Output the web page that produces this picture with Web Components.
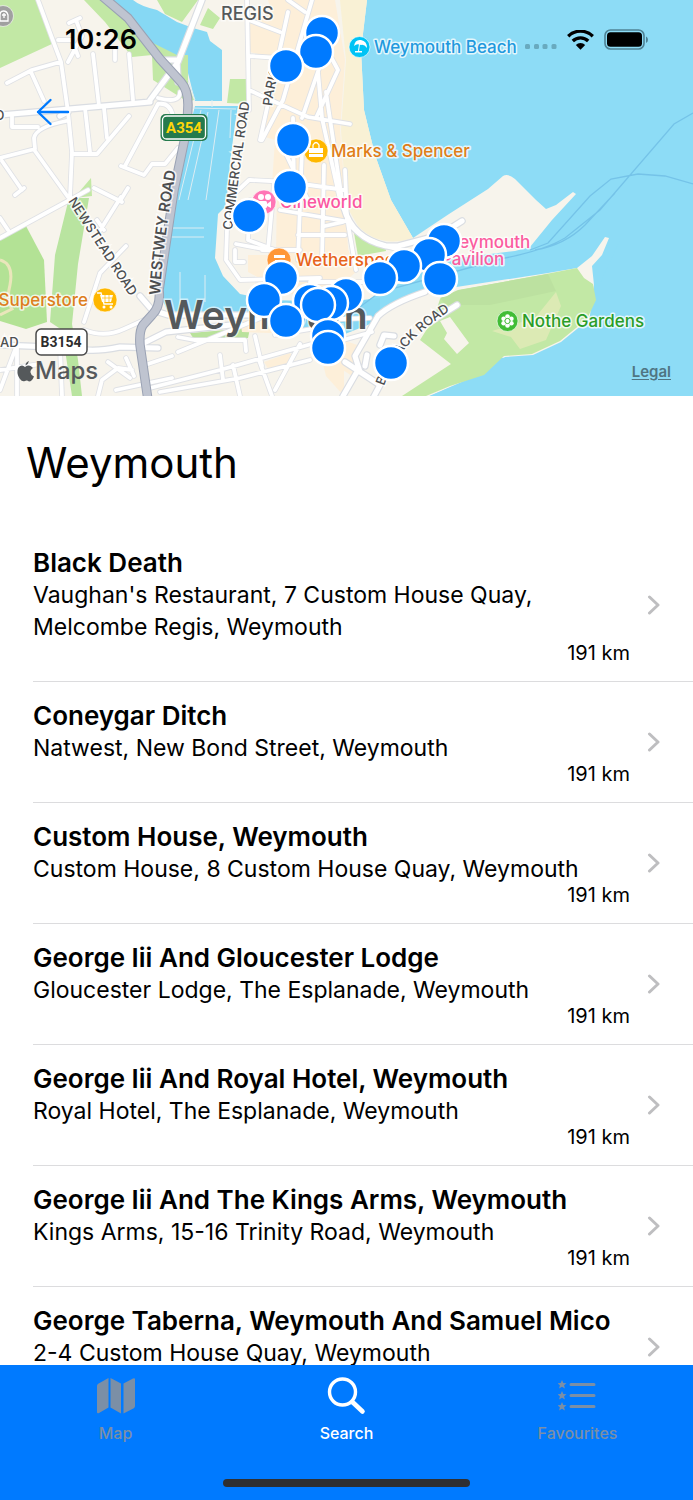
<!DOCTYPE html>
<html lang="en">
<head>
<meta charset="utf-8">
<meta name="viewport" content="width=device-width, initial-scale=1">
<title>Weymouth</title>
<style>
  body {
    margin: 0;
    background: #fff;
    color: #000;
    font-family: Inter, "Liberation Sans", sans-serif;
  }
</style>
</head>
<body>
<app-screen>
  <map-view slot="map"></map-view>
  <status-bar slot="status" time="10:26"></status-bar>
  <h1 slot="title">Weymouth</h1>
  <place-row name="Black Death" distance="191 km">Vaughan's Restaurant, 7 Custom House Quay, Melcombe Regis, Weymouth</place-row>
  <place-row name="Coneygar Ditch" distance="191 km">Natwest, New Bond Street, Weymouth</place-row>
  <place-row name="Custom House, Weymouth" distance="191 km">Custom House, 8 Custom House Quay, Weymouth</place-row>
  <place-row name="George Iii And Gloucester Lodge" distance="191 km">Gloucester Lodge, The Esplanade, Weymouth</place-row>
  <place-row name="George Iii And Royal Hotel, Weymouth" distance="191 km">Royal Hotel, The Esplanade, Weymouth</place-row>
  <place-row name="George Iii And The Kings Arms, Weymouth" distance="191 km">Kings Arms, 15-16 Trinity Road, Weymouth</place-row>
  <place-row name="George Taberna, Weymouth And Samuel Mico" distance="191 km">2-4 Custom House Quay, Weymouth</place-row>
  <tab-bar slot="tabs"></tab-bar>
</app-screen>

<script>
class AppScreen extends HTMLElement {
  constructor() {
    super();
    this.attachShadow({ mode: "open" });
    this.shadowRoot.innerHTML = `
      <style>
        :host {
          display: flex;
          flex-direction: column;
          height: 100vh;
          overflow: hidden;
        }
        header {
          position: relative;
          flex: none;
        }
        .over {
          position: absolute;
          top: 0;
          left: 0;
          right: 0;
        }
        main {
          flex: 1;
          min-height: 0;
          overflow: hidden;
        }
        ::slotted(h1) {
          margin: 0;
          padding: 39px 26px 38px;
          font-size: 42px;
          line-height: 56px;
          font-weight: 400;
        }
      </style>
      <header>
        <slot name="map"></slot>
        <div class="over"><slot name="status"></slot></div>
      </header>
      <main>
        <slot name="title"></slot>
        <slot></slot>
      </main>
      <slot name="tabs"></slot>`;
  }
}
customElements.define("app-screen", AppScreen);

class StatusBar extends HTMLElement {
  constructor() {
    super();
    this.attachShadow({ mode: "open" });
  }
  connectedCallback() {
    this.shadowRoot.innerHTML = `
      <style>
        :host {
          display: flex;
          justify-content: space-between;
          align-items: center;
          padding: 24px 44px 0 65px;
        }
        time {
          font-size: 27px;
          line-height: 32px;
          font-weight: 600;
        }
        .icons {
          display: flex;
          align-items: center;
          gap: 10px;
        }
      </style>
      <time>${this.getAttribute("time")}</time>
      <div class="icons">
        <svg width="32" height="20" viewBox="0 0 32 20" fill="#69aabf">
          <rect x="0" y="14" width="5" height="5" rx="1.5"/>
          <rect x="9" y="14" width="5" height="5" rx="1.5"/>
          <rect x="17.500" y="14" width="5" height="5" rx="1.5"/>
          <rect x="26.500" y="14" width="5" height="5" rx="1.5"/>
        </svg>
        <svg width="27" height="20" viewBox="0 0 27 20">
          <g fill="none" stroke="#000" stroke-width="3.300">
            <path d="M1.200 6.200a17.600 17.600 0 0 1 24.600 0"/>
            <path d="M5.800 11a11 11 0 0 1 15.400 0"/>
          </g>
          <path d="M8.800 14.900a6.600 6.600 0 0 1 9.400 0L13.500 19.800z"/>
        </svg>
        <svg width="45" height="22" viewBox="0 0 45 22">
          <rect x="1" y="1" width="39" height="19" rx="5.500" fill="none" stroke="#4f8295" stroke-width="1.600"/>
          <rect x="3" y="3.200" width="35" height="14.600" rx="3.500"/>
          <path d="M42 7.500q2 .8 2 3.200t-2 3.200z" fill="#4f8295"/>
        </svg>
      </div>`;
  }
}
customElements.define("status-bar", StatusBar);

// later pins are drawn over earlier ones
const PINS = [
  [322, 33], [316, 52], [286, 66], [293, 140], [290, 187], [249, 216],
  [444, 241], [429, 255], [404, 266], [440, 279], [380, 278],
  [281, 278], [264, 300], [346, 295], [331, 303], [310, 301], [318, 305],
  [286, 321], [328, 336], [328, 348], [391, 363]
];

class MapView extends HTMLElement {
  constructor() {
    super();
    this.attachShadow({ mode: "open" });
    this.shadowRoot.innerHTML = `
      <style>
        :host {
          display: block;
          position: relative;
        }
        .map {
          display: block;
          width: 100%;
          height: auto;
        }
        button {
          position: absolute;
          top: 96px;
          left: 32px;
          padding: 0 4px;
          border: 0;
          background: none;
        }
        button svg {
          display: block;
        }
        .legal {
          position: absolute;
          right: 22px;
          bottom: 14px;
          font-size: 15px;
          line-height: 20px;
          font-weight: 600;
          color: #4f7583;
          text-underline-offset: 2px;
        }
        .poi {
          font-size: 17px;
          font-weight: 500;
          stroke: #fff;
          stroke-opacity: .75;
          stroke-width: 3px;
          stroke-linejoin: round;
          paint-order: stroke;
        }
        .street {
          font-size: 13px;
          font-weight: 500;
          fill: #4c4e50;
          stroke: #fff;
          stroke-opacity: .8;
          stroke-width: 3px;
          paint-order: stroke;
        }
        .town {
          fill: #55595b;
          stroke: #fff;
          stroke-opacity: .6;
          stroke-width: 3px;
          paint-order: stroke;
        }
      </style>
      <svg class="map" viewBox="0 0 693 396" role="img" aria-label="Map of Weymouth">
        <defs>
          <path id="minor" d="M38 0L52 38L61 62L68 112L72 152L70 197M58 40L72 40L78 56M69 23L80 18M76 20L82 36L68 62M7 83L32 70L60 62M31 72L44 101M93 54L99 106M129 54L133 100M115 50V60M85 108L90 152M104 108L107 138M73 154H97L129 116M0 158L35 149L34 138Q36 127 66 121M12 116V127H38M35 151L68 197M2 161L22 190M15 195L24 188M158 104L125 166M121 166L144 175L152 164L165 164L178 148M158 104Q170 102 173 116M158 98Q180 104 180 92M94 188L122 202M128 188L120 201M0 238L88 190M121 197L99 232M97 220L104 230M126 246L100 273L84 322M0 218L8 230M84 330Q105 338 124 329L144 320M15 350L0 390M17 348V396M60 348L62 396M0 370L40 364M98 396L102 380L118 368L132 370M108 362L130 378M126 358L134 376M116 390L172 378M148 364L172 356M178 337L194 340H245L246 351M255 336L262 366M220 355L223 380M233 365L240 396M259 360L272 396M178 352L275 312M150 388L220 370L315 343M160 392L240 378L310 360M318 320L370 318M343 340L372 332M275 335L335 325M275 390L300 344M247 0L249 110M312 0L283 100L262 140M288 12L260 140M249 90L308 117L350 124M249 56L280 58M249 20L280 32M288 0L305 12M302 118L322 60L330 20M318 72L322 118L340 200M326 92L342 200M316 118L338 70L322 40M293 118L294 190M302 150L298 260M324 165L322 260M250 180L288 182L345 190M249 180L228 200L226 260L240 280L320 278M250 200L248 240L275 250M274 185L268 250L236 244M280 210L350 222M262 250H300M235 250V262H244M298 235H345M310 282H380M284 150L308 200M345 170L347 218Q352 238 400 250M347 218L356 270M343 222L325 226"/>
          <path id="major" d="M0 115L150 102M202 0L178 62L150 100M160 60H177L178 82M68 112L60 116M140 296L152 310L168 315H290M158 348L120 347Q90 353 78 348L0 345M140 345L166 332L240 324M462 221L440 235L398 246L386 246Q352 238 344 208M457 305L430 322M425 292Q392 303 378 316L355 356L360 372M345 362L380 385L372 400M380 345L384 335L394 336M358 370L343 396M365 366L367 355"/>
          <path id="a354" d="M102 -4L128 18L160 59L181 82Q188 90 188 105L187 128L174 190L159 290Q161 306 152 315L143 325Q139 331 140 345L148 400"/>
        </defs>

        <!-- sea, land and harbour -->
        <rect width="693" height="396" fill="#8ddcf6"/>
        <path fill="#f7f4ec" d="M0 0H367L361 50L364 110L375 155L391 200L413 238L449 214L488 189L503 176Q508 173 515 179L536 200L546 209L556 205L573 192L576 194L552 220L530 247L515 251L450 259L400 283L366 301L340 316L366 326L392 304L424 292L548 273L577 268L592 256L605 237L609 238L602 255L592 266L594 285L586 345L540 356L498 358L484 372L430 396H0z"/>
        <path fill="#f9f1d5" d="M340 0H367L361 50L364 110L375 155L391 200L413 238Q380 249 358 226L346 205L341 130L346 60z"/>

        <g fill="#c2e8a5">
          <path d="M0 0H40L54 43L0 68z"/>
          <path d="M84 0H106L178 50L188 55V84L194 100L188 102L153 80L152 55L132 57L105 22z"/>
          <path d="M157 0H198L182 22L165 14zM200 25L208 8L220 18L213 29zM230 79H247V104L227 103z"/>
          <path d="M91 178L92 196L74 198z"/>
          <path fill="#b9e4a0" d="M69 198H89L78 264L72 324L78 360L82 396H72L62 330L50 322L55 255z"/>
          <path fill="#b3e295" d="M0 236L26 226L44 260L47 322L26 329L0 321z"/>
          <path fill="#b9e29b" d="M190 333L250 328L248 338L195 341z"/>
          <path d="M353 227L385 245L386 251L358 256z"/>
          <path d="M440 299L460 290L546 274L577 268L584 278L593 284L596 300L587 319L560 341L532 354L504 356L484 375L450 386L426 396H402L451 364L420 340L434 318z"/>
        </g>
        <path fill="#bce1a0" d="M440 298L458 290L548 274L556 291L490 305L446 305z"/>
        <path fill="#dceab4" d="M492 331L535 318L556 292L561 306L546 340L520 349L511 337z"/>
        <path fill="#8ddcf6" d="M693 240H620L597 290L597 302L588 320L561 342L533 355L505 357L485 376L451 387L427 397H693z"/>
        <path fill="#f7f4ec" d="M440 321L450 317L469 343L457 354L444 339L447 333z"/>
        <path fill="none" stroke="#eae6bb" stroke-width="3" d="M0 260Q14 264 10 285Q6 300 12 309L0 315"/>

        <g fill="#fdefd9">
          <path d="M268 0H335L345 60L340 130L346 205L348 250H330V186L272 184L275 140L262 136L284 60L250 52V18L272 14z"/>
          <path d="M277 186H345V240L356 272L330 294H290L248 272V255H276z"/>
          <path d="M240 320L300 322V334L242 332zM264 362L290 353L296 364L270 372zM322 360H344V396L326 376zM343 340L360 346L352 376L343 370z"/>
        </g>

        <g fill="#86d8f4">
          <path d="M108 0H133Q140 6 157 10L177 22L193 28L207 32L210 41L222 50V101H195L188 73V55H177L147 40L127 22z"/>
          <path d="M195 106H238L235 124L230 163L226 206L218 214L215 258L223 276L240 294L270 300L345 302L380 298V320L345 334L300 330L250 313H168L162 298L160 270L168 210L184 146L190 125z"/>
        </g>
        <g fill="none" stroke="#dcedf3" stroke-width="1">
          <path d="M192 108L236 109M201 110L179 200M208 112L188 200M219 110L206 200M231 110L230 138M212 100V107M167 228H204M172 237H204M180 272V305M205 275V302M188 80L195 100"/>
        </g>
        <g fill="none" stroke="#75c3e8" stroke-width="1.300">
          <path d="M693 113L674 124L600 210L565 238Q545 250 505 258L380 292L345 318M693 184L665 176L638 174L611 179L590 196L548 243L530 250M615 193L585 225Q565 245 535 250"/>
        </g>

        <g fill="none" stroke-linecap="round" stroke-linejoin="round">
          <use href="#minor" stroke="#dfe1e5" stroke-width="5.500"/>
          <use href="#major" stroke="#dadde2" stroke-width="7.500"/>
          <use href="#minor" stroke="#fff" stroke-width="3.800"/>
          <use href="#major" stroke="#fff" stroke-width="5.200"/>
          <use href="#a354" stroke="#9aa2b4" stroke-width="9.500"/>
          <use href="#a354" stroke="#bfc4d0" stroke-width="7.500"/>
        </g>

        <!-- street names -->
        <g class="street">
          <path id="st1" d="M68 201L136 306" fill="none" stroke="none"/>
          <path id="st2" d="M232 230Q240 165 253 80" fill="none" stroke="none"/>
          <path id="st3" d="M160 295Q163 240 178 160" fill="none" stroke="none"/>
          <path id="st4" d="M272 106Q276 70 296 20" fill="none" stroke="none"/>
          <path id="st5" d="M384 386Q400 338 462 304" fill="none" stroke="none"/>
          <text><textPath href="#st1">NEWSTEAD ROAD</textPath></text>
          <text><textPath href="#st2">COMMERCIAL ROAD</textPath></text>
          <text font-weight="600" style="font-size:15px"><textPath href="#st3">WESTWEY ROAD</textPath></text>
          <text><textPath href="#st4">PARK</textPath></text>
          <text><textPath href="#st5">BARRACK ROAD</textPath></text>
          <text x="0" y="347">AD</text>
          <text x="-5" y="120">D</text>
        </g>

        <!-- road shields -->
        <rect x="160.500" y="114" width="47" height="27" rx="5" fill="#257a4d"/>
        <rect x="162.500" y="116" width="43" height="23" rx="4" fill="none" stroke="#fff" stroke-width="1.300"/>
        <text x="184" y="133" text-anchor="middle" font-family="Roboto" font-size="15" font-weight="700" fill="#ffd60a">A354</text>
        <rect x="36" y="329" width="51" height="26" rx="5" fill="#fff" stroke="#4a4a4a" stroke-width="1.500"/>
        <text x="61" y="347" text-anchor="middle" font-family="Roboto" font-size="14" font-weight="700" fill="#2e2e2e">B3154</text>

        <g class="town">
          <text x="221" y="20" font-size="18" font-weight="500">REGIS</text>
          <text x="164" y="329" font-size="39" font-weight="600">Weymouth</text>
        </g>

        <!-- places -->
        <g stroke="#fff" stroke-opacity=".6" stroke-width="1">
          <circle cx="3" cy="16" r="10.500" fill="#a0a0a0"/>
          <circle cx="359.500" cy="47" r="10.500" fill="#00c3f5"/>
          <circle cx="316" cy="151" r="12" fill="#ffb700"/>
          <circle cx="264" cy="202" r="12" fill="#ff76b5"/>
          <circle cx="279" cy="260" r="12" fill="#ff9737"/>
          <circle cx="105" cy="300" r="12" fill="#ffb700"/>
          <circle cx="507.500" cy="321" r="10.500" fill="#41bd36"/>
        </g>
        <path fill="none" stroke="#fff" stroke-width="1.300" d="M0 21V15Q0 11 3.500 11T8 15V21H0M4 13V18M2 15H6"/>
        <path fill="#fff" d="M354 46Q355 39 361 40Q367 41 367 48Q364 44 361 45Q357 43 354 46zM360 44L359 51H362V52.500H355V51H358L359 44z"/>
        <g fill="#fff">
          <path d="M309 148H323V153H309zM309 154H323V157H309z"/>
          <path d="M313 148V145Q316 140 319 145V148" fill="none" stroke="#fff" stroke-width="1.300"/>
          <circle cx="261" cy="197" r="3"/><circle cx="268" cy="197" r="3"/>
          <rect x="258" y="201" width="9" height="7" rx="1.500"/><path d="M267 204L271 201V208L267 206z"/>
          <path d="M274 255H285V258H274zM275 260H283V267H275z"/>
        </g>
        <g fill="#fff">
          <path d="M97 293H101L104 304H113" fill="none" stroke="#fff" stroke-width="1.400"/>
          <path d="M100 295H113L111 302H102z"/>
          <circle cx="104" cy="307" r="1.500"/><circle cx="111" cy="307" r="1.500"/>
          <path d="M102 298H112M105 295V302M109 295V302" stroke="#ffb700" stroke-width=".7"/>
        </g>
        <g fill="#fff">
          <circle cx="507.500" cy="316.500" r="2.300"/><circle cx="507.500" cy="325.500" r="2.300"/>
          <circle cx="503.600" cy="318.800" r="2.300"/><circle cx="511.400" cy="318.800" r="2.300"/>
          <circle cx="503.600" cy="323.200" r="2.300"/><circle cx="511.400" cy="323.200" r="2.300"/>
          <circle cx="507.500" cy="321" r="2.600" stroke="#41bd36"/>
        </g>
        <g class="poi">
          <text x="374" y="53" fill="#2199de">Weymouth Beach</text>
          <text x="331" y="157" fill="#e07e18">Marks &amp; Spencer</text>
          <text x="280" y="208" fill="#fb55a1">Cineworld</text>
          <text x="296" y="266" fill="#e7631b">Wetherspoon</text>
          <text x="443" y="248" fill="#fb5c9f">Weymouth</text>
          <text x="441" y="265" fill="#fb5c9f">Pavilion</text>
          <text x="522" y="327" fill="#2a9d27">Nothe Gardens</text>
          <text x="88" y="306" text-anchor="end" fill="#dd7f1d">Superstore</text>
        </g>

        <!-- maps logo -->
        <path fill="#55595b" d="M29 361Q28.500 364 25.500 365.500Q25.500 362 29 361zM25 367Q28 364.500 31 366.200L33 368Q30 370 30.500 372.500Q31 375.500 34 376.500Q32 381.500 29 381.500Q27 380 25 381Q22 382 20 379Q17 375 17.500 370.500Q18 366 22 365.500Q23.500 365.500 25 367z"/>
        <text x="35" y="379" font-size="24" font-weight="500" fill="#55595b">Maps</text>

        <g fill="#007aff" stroke="#fff" stroke-width="2.500">
          ${PINS.map(([x, y]) => `<circle cx="${x}" cy="${y}" r="17"/>`).join("")}
        </g>
      </svg>
      <button type="button" aria-label="Back">
        <svg width="34" height="32" viewBox="0 0 34 32" fill="none" stroke="#007aff" stroke-width="2.400" stroke-linecap="round" stroke-linejoin="round">
          <path d="M14.500 4L2 16L14.500 28M2 16H32"/>
        </svg>
      </button>
      <a class="legal" href="#legal">Legal</a>`;
  }
}
customElements.define("map-view", MapView);

class PlaceRow extends HTMLElement {
  constructor() {
    super();
    this.attachShadow({ mode: "open" });
  }
  connectedCallback() {
    this.shadowRoot.innerHTML = `
      <style>
        :host {
          display: block;
          margin-left: 33px;
          border-bottom: 1px solid #dcdcde;
        }
        a {
          display: flex;
          align-items: center;
          gap: 17px;
          padding: 18px 33px 18px 0;
          color: inherit;
          text-decoration: none;
        }
        .text {
          flex: 1;
          min-width: 0;
        }
        h2, p {
          margin: 0;
          font-weight: 400;
          line-height: 32px;
        }
        h2 {
          font-size: 26px;
          font-weight: 600;
          white-space: nowrap;
        }
        p {
          font-size: 23px;
        }
        .distance {
          font-size: 20px;
          line-height: 20px;
          text-align: right;
        }
        svg {
          flex: none;
        }
      </style>
      <a href="#place">
        <div class="text">
          <h2>${this.getAttribute("name")}</h2>
          <p><slot></slot></p>
          <div class="distance">${this.getAttribute("distance")}</div>
        </div>
        <svg width="13" height="22" viewBox="0 0 13 22" fill="none" stroke="#bebec0" stroke-width="3" stroke-linecap="round" stroke-linejoin="round">
          <path d="M2.500 3L11 11L2.500 19"/>
        </svg>
      </a>`;
  }
}
customElements.define("place-row", PlaceRow);

class TabBar extends HTMLElement {
  constructor() {
    super();
    this.attachShadow({ mode: "open" });
    const star = "M0 -4.500L1.300 -1.400L4.500 -1.300L2.100 .8L2.900 4L0 2.300L-2.900 4L-2.100 .8L-4.500 -1.300L-1.300 -1.400z";
    this.shadowRoot.innerHTML = `
      <style>
        :host {
          display: block;
          flex: none;
          background: #007aff;
          padding: 10px 0 13px;
        }
        nav {
          display: grid;
          grid-template-columns: repeat(3, 1fr);
        }
        a {
          display: flex;
          flex-direction: column;
          align-items: center;
          gap: 6px;
          color: #7b8fa6;
          font-size: 16px;
          line-height: 24px;
          font-weight: 500;
          text-decoration: none;
        }
        a[aria-current] {
          color: #fff;
        }
        .home {
          width: 247px;
          height: 8px;
          margin: 34px auto 0;
          border-radius: 4px;
          background: #2f2f31;
        }
      </style>
      <nav>
        <a href="#map">
          <svg width="40" height="40" viewBox="0 0 40 40" fill="currentColor">
            <path d="M1 11Q1 9.500 2.200 8.800L12.500 3V32.500L3 38Q1 39 1 37zM14.500 3L25 8.500V38.500L14.500 32.500zM27.500 8.500L37 3.500Q39 2.500 39 4.500V31Q39 32.500 37.800 33.200L27.500 38.500z"/>
          </svg>
          Map
        </a>
        <a href="#search" aria-current="page">
          <svg width="40" height="40" viewBox="0 0 40 40" fill="none" stroke="currentColor" stroke-linecap="round">
            <circle cx="15.500" cy="17" r="13" stroke-width="3.400"/>
            <path d="M26 27.500L35.500 36.500" stroke-width="4.600"/>
          </svg>
          Search
        </a>
        <a href="#favourites">
          <svg width="40" height="40" viewBox="0 0 40 40" fill="currentColor">
            <path d="${star}" transform="translate(4 9.500)"/>
            <path d="${star}" transform="translate(4 20.500)"/>
            <path d="${star}" transform="translate(4 31.500)"/>
            <path d="M13 9.500H36M13 20.500H36M13 31.500H36" stroke="currentColor" stroke-width="3" stroke-linecap="round"/>
          </svg>
          Favourites
        </a>
      </nav>
      <div class="home"></div>`;
  }
}
customElements.define("tab-bar", TabBar);
</script>
</body>
</html>
